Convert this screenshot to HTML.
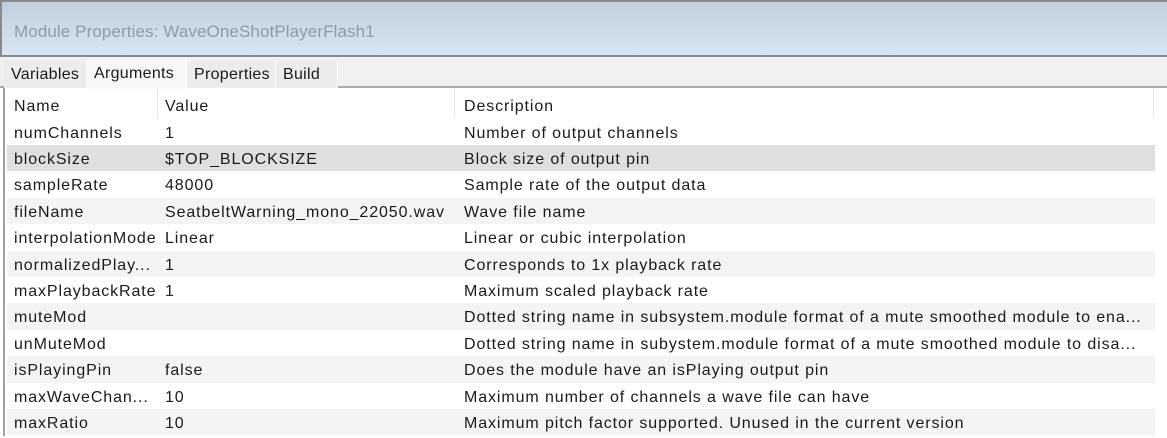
<!DOCTYPE html>
<html><head><style>
body{margin:0;width:1167px;height:436px;overflow:hidden;background:#fff;font-family:"Liberation Sans",sans-serif;font-size:16px;letter-spacing:0.9px;color:#1a1a1a;position:relative}
.title{position:absolute;left:0;top:0;width:1167px;height:57px;box-sizing:border-box;border:2px solid #8a8a8a;border-right:none;background:linear-gradient(#bfd0dc,#d7e5f2);}
.title span{position:absolute;left:12px;top:20px;font-size:17px;color:#8d9ba6;letter-spacing:0.1px}
.tabs{position:absolute;left:0;top:57px;width:1167px;height:31px;background:#f0f0f0;border-bottom:2px solid #a9a9a9;box-sizing:border-box}
.tab{position:absolute;top:4px;height:27px;background:#ececec;line-height:28px;padding-left:7px;box-sizing:border-box;border-right:1px solid #fff;font-size:16px;letter-spacing:0.3px}
.tab.sel{top:2px;height:30px;background:#f7f7f7;line-height:30px;z-index:2}
.tbl{position:absolute;left:3px;top:88px;width:1150px;height:348px;border-left:2px solid #a0a0a0}
.row{position:absolute;left:2px;width:1148px;height:26.4px;line-height:29px}
.row span{position:absolute;white-space:nowrap}
.g{background:#f4f4f4}.s{background:#dfdfdf}
.a{left:7px}.b{left:158px}.c{left:457px}
.sep{position:absolute;top:0;width:1px;height:30px;background:#e6e6e6}
</style></head><body>
<div class="title"><span>Module Properties: WaveOneShotPlayerFlash1</span></div>
<div class="tabs">
<div class="tab" style="left:4px;width:83px">Variables</div>
<div class="tab sel" style="left:87px;width:100px">Arguments</div>
<div class="tab" style="left:187px;width:89px">Properties</div>
<div class="tab" style="left:276px;width:62px">Build</div>
</div>
<div class="tbl">
<div class="sep" style="left:152px"></div><div class="sep" style="left:449px"></div><div class="sep" style="left:1148px"></div>
<div class="row" style="top:4px"><span class="a">Name</span><span class="b">Value</span><span class="c">Description</span></div>
<div class="row" style="top:30.6px"><span class="a">numChannels</span><span class="b">1</span><span class="c">Number of output channels</span></div>
<div class="row s" style="top:57px"><span class="a">blockSize</span><span class="b">$TOP_BLOCKSIZE</span><span class="c">Block size of output pin</span></div>
<div class="row" style="top:83.4px"><span class="a">sampleRate</span><span class="b">48000</span><span class="c">Sample rate of the output data</span></div>
<div class="row g" style="top:109.8px"><span class="a">fileName</span><span class="b">SeatbeltWarning_mono_22050.wav</span><span class="c">Wave file name</span></div>
<div class="row" style="top:136.2px"><span class="a">interpolationMode</span><span class="b">Linear</span><span class="c">Linear or cubic interpolation</span></div>
<div class="row g" style="top:162.6px"><span class="a">normalizedPlay...</span><span class="b">1</span><span class="c">Corresponds to 1x playback rate</span></div>
<div class="row" style="top:189px"><span class="a">maxPlaybackRate</span><span class="b">1</span><span class="c">Maximum scaled playback rate</span></div>
<div class="row g" style="top:215.4px"><span class="a">muteMod</span><span class="c">Dotted string name in subsystem.module format of a mute smoothed module to ena...</span></div>
<div class="row" style="top:241.8px"><span class="a">unMuteMod</span><span class="c">Dotted string name in subystem.module format of a mute smoothed module to disa...</span></div>
<div class="row g" style="top:268.2px"><span class="a">isPlayingPin</span><span class="b">false</span><span class="c">Does the module have an isPlaying output pin</span></div>
<div class="row" style="top:294.6px"><span class="a">maxWaveChan...</span><span class="b">10</span><span class="c">Maximum number of channels a wave file can have</span></div>
<div class="row g" style="top:321px"><span class="a">maxRatio</span><span class="b">10</span><span class="c">Maximum pitch factor supported. Unused in the current version</span></div>
</div>
</body></html>
